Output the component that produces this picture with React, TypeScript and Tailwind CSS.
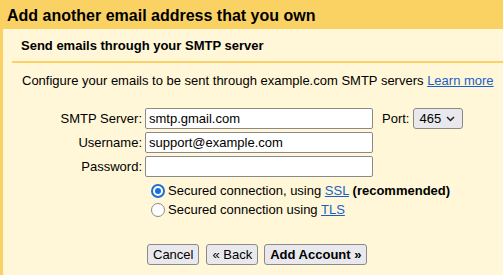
export default function App() {
  return (
    <div
      className="w-[503px] h-[275px] bg-[#fad163] flex flex-col overflow-hidden text-[13px] text-black"
      style={{ fontFamily: '"Liberation Sans", Arial, sans-serif' }}
    >
      <h1 className="h-[29px] pl-[7px] pt-[6px] text-[16px] font-bold leading-[20px]">
        Add another email address that you own
      </h1>
      <div className="ml-[3px] flex-1 bg-[#fff7d7] pl-[9px]">
        <div className="border-b-2 border-[#fad163] h-[34px] pl-[9px] pt-[9px] font-bold leading-[16px]">
          Send emails through your SMTP server
        </div>
        <p className="pl-[10px] pt-[10px] leading-[16px]">
          Configure your emails to be sent through example.com SMTP servers{" "}
          <a href="#" className="text-[#1a5fc8] underline">
            Learn more
          </a>
        </p>

        <div className="mt-[19px] flex flex-col gap-[3px]">
          <div className="flex items-center">
            <label className="w-[133px] text-right pr-[3px]">SMTP Server:</label>
            <input
              defaultValue="smtp.gmail.com"
              className="w-[228px] h-[21px] bg-white border border-[#8a8a8a] rounded-[2px] px-[3px] outline-none"
            />
            <label className="ml-[9px] mr-[4px]">Port:</label>
            <div className="w-[50px] h-[21px] bg-[#e9e9ed] border border-[#8a8a8a] rounded-[3px] flex items-center justify-between pl-[5px] pr-[7px]">
              <span>465</span>
              <svg width="9" height="6" viewBox="0 0 9 6">
                <path d="M1 1l3.5 3.5L8 1" fill="none" stroke="#222" strokeWidth="1.5" />
              </svg>
            </div>
          </div>
          <div className="flex items-center">
            <label className="w-[133px] text-right pr-[3px]">Username:</label>
            <input
              defaultValue="support@example.com"
              className="w-[228px] h-[21px] bg-white border border-[#8a8a8a] rounded-[2px] px-[3px] outline-none"
            />
          </div>
          <div className="flex items-center">
            <label className="w-[133px] text-right pr-[3px]">Password:</label>
            <input
              type="password"
              className="w-[228px] h-[21px] bg-white border border-[#8a8a8a] rounded-[2px] px-[3px] outline-none"
            />
          </div>
        </div>

        <div className="mt-[5px] ml-[139px] flex flex-col gap-[2px] leading-[17px]">
          <div className="flex items-center gap-[3px]">
            <span className="w-[14px] h-[14px] rounded-full border-2 border-[#1a6fd8] flex items-center justify-center bg-white">
              <span className="w-[6px] h-[6px] rounded-full bg-[#1a6fd8]" />
            </span>
            <span>
              Secured connection, using{" "}
              <a href="#" className="text-[#1a5fc8] underline">SSL</a>{" "}
              <b>(recommended)</b>
            </span>
          </div>
          <div className="flex items-center gap-[3px]">
            <span className="w-[14px] h-[14px] rounded-full border-[1.5px] border-[#8a8a8a] bg-white" />
            <span>
              Secured connection using{" "}
              <a href="#" className="text-[#1a5fc8] underline">TLS</a>
            </span>
          </div>
        </div>

        <div className="mt-[26px] ml-[135px] flex gap-[7px]">
          <button className="h-[21px] px-[5px] bg-[#e9e9ed] border border-[#8a8a8a] rounded-[3px] leading-none">
            Cancel
          </button>
          <button className="h-[21px] px-[5px] bg-[#e9e9ed] border border-[#8a8a8a] rounded-[3px] leading-none">
            « Back
          </button>
          <button className="h-[21px] px-[5px] -ml-[1px] bg-[#e9e9ed] border border-[#8a8a8a] rounded-[3px] font-bold leading-none">
            Add Account »
          </button>
        </div>
      </div>
    </div>
  );
}
